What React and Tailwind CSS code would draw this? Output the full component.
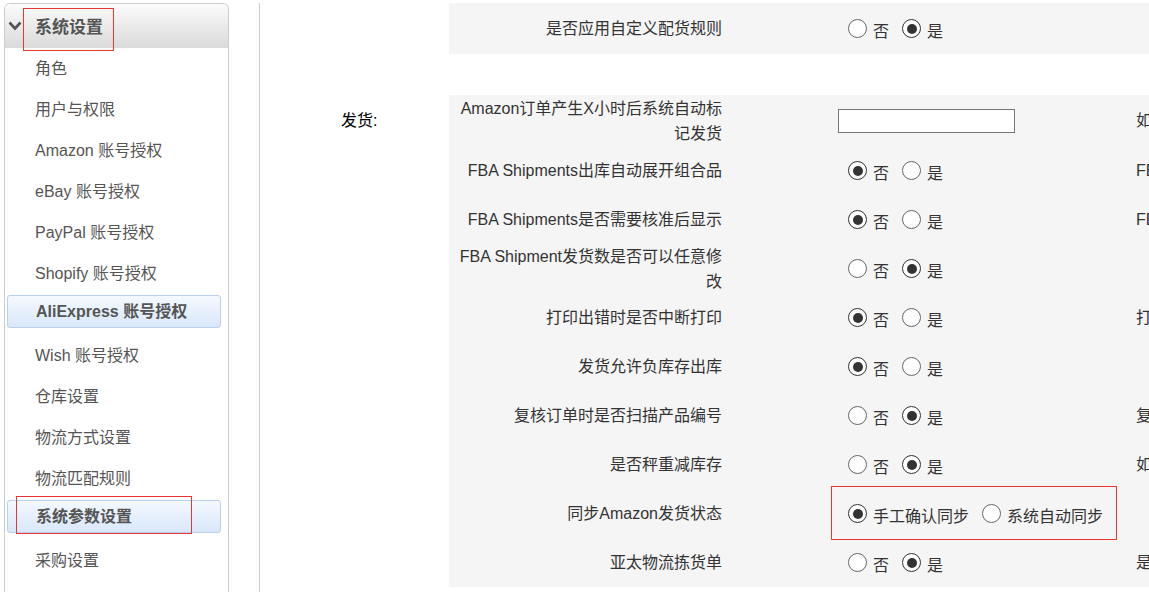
import React from 'react';

const menu = [
  { name: '角色' },
  { name: '用户与权限' },
  { name: 'Amazon 账号授权' },
  { name: 'eBay 账号授权' },
  { name: 'PayPal 账号授权' },
  { name: 'Shopify 账号授权' },
  { name: 'AliExpress 账号授权', active: true },
  { name: 'Wish 账号授权' },
  { name: '仓库设置' },
  { name: '物流方式设置' },
  { name: '物流匹配规则' },
  { name: '系统参数设置', active: true, marked: true },
  { name: '采购设置' },
];

const shipRows = [
  { label: 'Amazon订单产生X小时后系统自动标记发货', input: true, note: '如果设置为0则不自动标记发货', h: 'h-[51px]' },
  { label: 'FBA Shipments出库自动展开组合品', value: 0, note: 'FBA Shipments出库时组合品按子产品扣减库存' },
  { label: 'FBA Shipments是否需要核准后显示', value: 0, note: 'FBA Shipments需要核准后才显示在列表中' },
  { label: 'FBA Shipment发货数是否可以任意修改', value: 1 },
  { label: '打印出错时是否中断打印', value: 0, note: '打印出错时停止后续打印任务' },
  { label: '发货允许负库存出库', value: 0 },
  { label: '复核订单时是否扫描产品编号', value: 1, note: '复核订单时需要逐个扫描产品编号' },
  { label: '是否秤重减库存', value: 1, note: '如果选择是，则称重后扣减库存' },
  { label: '同步Amazon发货状态', sync: true },
  { label: '亚太物流拣货单', value: 1, note: '是否打印亚太物流拣货单' },
];

function Radio({ checked, text, first }) {
  return (
    <span className={`flex items-center ${first ? 'ml-[10px]' : 'ml-[13px]'}`}>
      <span className={`flex h-[19px] w-[19px] items-center justify-center rounded-full border bg-white ${checked ? 'border-[#333]' : 'border-[#666]'}`}>
        {checked && <span className="h-[10px] w-[10px] rounded-full bg-[#333]" />}
      </span>
      <span className="ml-[6px] mt-[6px] leading-[20px]">{text}</span>
    </span>
  );
}

function Row({ row }) {
  return (
    <div className={`flex items-center ${row.h || 'h-[49px]'}`}>
      <div className="w-[280px] shrink-0 pl-[1px] pr-[7px] text-right leading-[25px]">{row.label}</div>
      <div className="relative flex w-[400px] shrink-0 items-center pl-[109px]">
        {row.input && <input type="text" className="h-[24px] w-[177px] border border-[#767676] bg-white outline-none" />}
        {row.sync && (
          <>
            <Radio first checked text="手工确认同步" />
            <Radio text="系统自动同步" />
            <div className="pointer-events-none absolute left-[102px] top-[-15px] h-[54px] w-[286px] border border-[#ee3333]" />
          </>
        )}
        {row.value !== undefined && (
          <>
            <Radio first checked={row.value === 0} text="否" />
            <Radio checked={row.value === 1} text="是" />
          </>
        )}
      </div>
      <div className="flex-1 overflow-hidden whitespace-nowrap pl-[7px] leading-[25px]">{row.note}</div>
    </div>
  );
}

export default function App() {
  return (
    <div className="flex h-[592px] w-[1149px] overflow-hidden bg-white text-[16px] text-[#333] font-['Liberation_Sans','Noto_Sans_CJK_SC',sans-serif]">
      {/* side menu */}
      <aside className="relative ml-[4px] mt-[3px] h-[600px] w-[225px] shrink-0 rounded-t-[6px] border-x border-t border-[#cccccc] bg-white">
        <div className="flex h-[44px] items-center rounded-t-[5px] bg-linear-to-b from-[#fbfbfb] to-[#dadada] pl-[3px] pt-[3px]">
          <svg width="14" height="10" viewBox="0 0 14 10" className="mt-[-4px]">
            <polyline points="1.5,1.5 7,7.5 12.5,1.5" fill="none" stroke="#555" strokeWidth="2.6" />
          </svg>
          <span className="ml-[13px] text-[17px] font-bold text-[#555]">系统设置</span>
        </div>
        <div className="pointer-events-none absolute left-[18px] top-[4px] h-[43px] w-[91px] border border-[#ee3333]" />
        <ul>
          {menu.map((m) =>
            m.active ? (
              <li key={m.name} className="relative h-[41px] pt-[1px]">
                <div className="ml-[2px] mr-[7px] flex h-[33px] items-center rounded-[3px] border border-[#b9d0ef] bg-linear-to-b from-[#f4f9ff] to-[#d9e7f9] pl-[28px] font-bold text-[#555]">
                  {m.name}
                </div>
                {m.marked && <div className="pointer-events-none absolute left-[11px] top-[-3px] h-[38px] w-[176px] border border-[#ee3333]" />}
              </li>
            ) : (
              <li key={m.name} className="flex h-[41px] items-center pl-[30px] text-[#555]">
                {m.name}
              </li>
            )
          )}
        </ul>
      </aside>

      <div className="ml-[30px] mt-[3px] w-px shrink-0 bg-[#cccccc]" />

      {/* settings */}
      <main className="min-w-0 flex-1 pt-[3px]">
        <section className="flex">
          <div className="w-[189px] shrink-0" />
          <div className="flex-1 bg-[#f5f5f5]">
            <Row row={{ label: '是否应用自定义配货规则', value: 1, h: 'h-[51px]' }} />
          </div>
        </section>
        <div className="h-[41px]" />
        <section className="flex">
          <div className="w-[189px] shrink-0 pl-[81px] pt-[13px] leading-[25px] text-black">发货:</div>
          <div className="flex-1 bg-[#f5f5f5]">
            {shipRows.map((r) => (
              <Row key={r.label} row={r} />
            ))}
          </div>
        </section>
      </main>
    </div>
  );
}
